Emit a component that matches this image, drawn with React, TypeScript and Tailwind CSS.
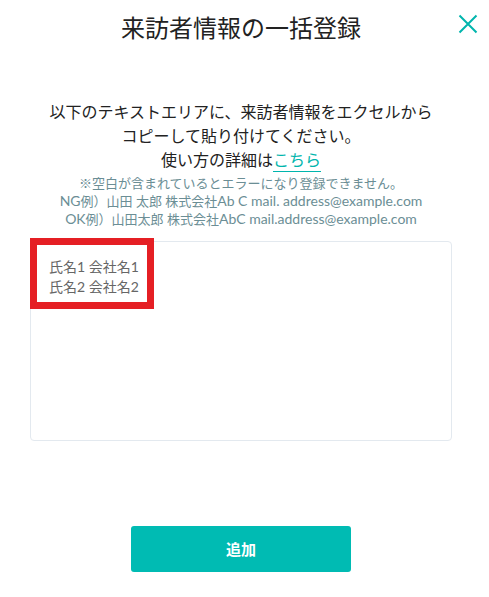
import React from "react";

export default function App() {
  const font = { fontFamily: '"Lato", "Noto Sans CJK JP", "Noto Sans", sans-serif' };
  return (
    <div className="relative w-[489px] h-[597px] bg-white overflow-hidden" style={font}>
      <div className="flex flex-col items-center w-[482px]">
        <div className="w-full h-[57px] pt-[12px]">
          <h1 className="text-center text-[24px] leading-[32px] text-[#222] font-normal">来訪者情報の一括登録</h1>
        </div>
        <div className="mt-[43px] text-center text-[16px] leading-[24px] text-[#222]">
          <p>以下のテキストエリアに、来訪者情報をエクセルから</p>
          <p>コピーして貼り付けてください。</p>
          <p>
            使い方の詳細は
            <span className="text-[#00b5ad] border-b-[1.5px] border-[#00b5ad] pb-[2px]">こちら</span>
          </p>
        </div>
        <div className="mt-[2px] text-center text-[13px] leading-[18px] text-[#6b8e95]">
          <p>※空白が含まれているとエラーになり登録できません。</p>
          <p>
            <span className="text-[14px]">NG</span>例）山田 太郎 株式会社<span className="text-[14px]">Ab C mail. address@example.com</span>
          </p>
          <p>
            <span className="text-[14px]">OK</span>例）山田太郎 株式会社<span className="text-[14px]">AbC mail.address@example.com</span>
          </p>
        </div>
        <textarea
          className="mt-[13px] w-[422px] h-[200px] border border-[#e3e9ef] rounded-[4px] px-[18px] pt-[15px] text-[14px] leading-[20px] text-[#666] resize-none outline-none"
          style={font}
          defaultValue={"氏名1 会社名1\n氏名2 会社名2"}
        />
        <button className="mt-[85px] w-[220px] h-[46px] rounded-[3px] bg-[#00bbb3] text-white text-[15px] font-bold">
          追加
        </button>
      </div>
      <button className="absolute left-[458px] top-[14px] w-[20px] h-[20px]">
        <svg width="20" height="20" viewBox="0 0 20 20">
          <path d="M1.5 1.5 L18.5 18.5 M18.5 1.5 L1.5 18.5" stroke="#00b5ad" strokeWidth="2" />
        </svg>
      </button>
      <div className="absolute left-[30px] top-[238px] w-[124px] h-[71px] border-[7px] border-[#e51f24]" />
    </div>
  );
}
